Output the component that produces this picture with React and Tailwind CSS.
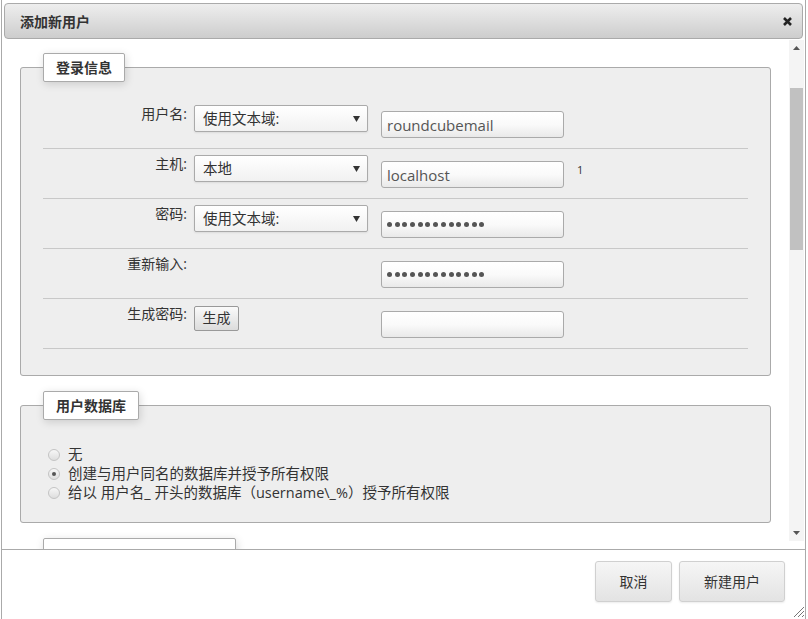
import React from "react";

const font = "font-['Open_Sans','Noto_Sans_CJK_SC',sans-serif]";

function Select({ text }) {
  return (
    <div className="w-[174px] h-[27px] border border-[#aaa] rounded-[2px] bg-linear-to-b from-white to-[#f1f1f1] shadow-[0_1px_2px_rgba(0,0,0,0.08)] flex items-center justify-between pl-[8px] pr-[7px] text-[14.5px] leading-[18px] text-[#333]">
      <span>{text}</span>
      <svg width="7" height="6" viewBox="0 0 7 6">
        <path d="M0 0 L7 0 L3.5 6 Z" fill="#333" />
      </svg>
    </div>
  );
}

function Dots() {
  return (
    <div className="flex gap-[2.7px]">
      {Array.from({ length: 13 }).map((_, i) => (
        <span key={i} className="block w-[5px] h-[5px] rounded-full bg-[#555]" />
      ))}
    </div>
  );
}

function Input({ children }) {
  return (
    <div className="w-[183px] h-[27px] border border-[#aaa] rounded-[3px] bg-linear-to-b from-white via-[#fafafa] to-[#e9e9e9] pl-[5px] flex items-center text-[15px] leading-[18px] text-[#555]">
      {children}
    </div>
  );
}

function Row({ label, middle, input, extra }) {
  return (
    <div className="flex h-[50px] border-b border-[#c8c8c8]">
      <div className="w-[147px] text-right pr-[3px] pt-[6px] text-[14px] leading-[18px] text-[#333]">{label}</div>
      <div className="w-[174px] ml-[4px] pt-[6px]">{middle}</div>
      <div className="ml-[13px] pt-[12px]">{input}</div>
      {extra}
    </div>
  );
}

function Legend({ children, className = "" }) {
  return (
    <legend className={"h-[29px] px-[12px] border border-[#aaa] rounded-[2px] bg-white text-[14px] font-bold leading-[27px] text-[#333] shadow-[1px_2px_8px_rgba(0,0,0,0.15)] " + className}>
      {children}
    </legend>
  );
}

function Radio({ checked, label }) {
  return (
    <div className="flex items-center h-[19px] text-[14.5px] leading-[19px] text-[#333]">
      <span className="ml-[5px] w-[12px] h-[12px] rounded-full border border-[#c4c4c4] bg-linear-to-b from-[#f7f7f7] to-[#dedede] flex items-center justify-center">
        {checked && <span className="w-[4px] h-[4px] rounded-full bg-[#555]" />}
      </span>
      <span className="ml-[8px]">{label}</span>
    </div>
  );
}

export default function App() {
  return (
    <div className={"w-[808px] h-[619px] bg-white overflow-hidden " + font}>
      <div className="ml-px w-[805px] h-full border-x border-[#aaa] flex flex-col pt-[3px]">
        {/* title bar */}
        <div className="mx-[2px] h-[36px] shrink-0 rounded-[4px] border border-[#aaa] bg-linear-to-b from-[#eeeeee] to-[#cdcdcd] flex items-center justify-between pl-[15px] pr-[10px]">
          <span className="text-[14px] font-bold text-[#333]">添加新用户</span>
          <svg width="9" height="9" viewBox="0 0 9 9">
            <path d="M1 1 L8 8 M8 1 L1 8" stroke="#222" strokeWidth="2.6" />
          </svg>
        </div>

        {/* body */}
        <div className="h-[510px] shrink-0 flex">
          <div className="flex-1 overflow-hidden px-[18px] pt-[14px]">
            <fieldset className="w-full border border-[#aaa] rounded-[3px] bg-[#eee] px-[22px] pt-[17px] pb-[26px]">
              <Legend>登录信息</Legend>
              <Row
                label="用户名:"
                middle={<Select text="使用文本域:" />}
                input={<Input>roundcubemail</Input>}
              />
              <Row
                label="主机:"
                middle={<Select text="本地" />}
                input={<Input>localhost</Input>}
                extra={<span className="ml-[13px] pt-[13px] text-[11px] text-[#333]">1</span>}
              />
              <Row
                label="密码:"
                middle={<Select text="使用文本域:" />}
                input={<Input><Dots /></Input>}
              />
              <Row label="重新输入:" middle={null} input={<Input><Dots /></Input>} />
              <Row
                label="生成密码:"
                middle={
                  <button className="w-[45px] h-[25px] border border-[#999] rounded-[2px] bg-linear-to-b from-[#fafafa] to-[#dcdcdc] text-[14px] leading-[18px] text-[#333]">
                    生成
                  </button>
                }
                input={<Input />}
              />
            </fieldset>

            <fieldset className="mt-[15px] w-full border border-[#aaa] rounded-[3px] bg-[#eee] px-[22px] pt-[25px] pb-[20px]">
              <Legend>用户数据库</Legend>
              <Radio label="无" />
              <Radio checked label="创建与用户同名的数据库并授予所有权限" />
              <Radio label="给以 用户名_ 开头的数据库（username\_%）授予所有权限" />
            </fieldset>

            <fieldset className="mt-[15px] w-full border border-[#aaa] rounded-[3px] bg-[#eee] px-[22px] h-[80px]">
              <Legend className="w-[193px]"></Legend>
            </fieldset>
          </div>

          {/* scrollbar */}
          <div className="w-[15px] mt-[1px] mb-[8px] mr-[1px] bg-[#f4f4f4] flex flex-col items-center">
            <svg className="mt-[6px]" width="7" height="4" viewBox="0 0 7 4">
              <path d="M0 4 L3.5 0 L7 4 Z" fill="#555" />
            </svg>
            <div className="mt-[38px] w-[13px] h-[162px] bg-[#c1c1c1]" />
            <div className="flex-1" />
            <svg className="mb-[6px]" width="7" height="4" viewBox="0 0 7 4">
              <path d="M0 0 L7 0 L3.5 4 Z" fill="#555" />
            </svg>
          </div>
        </div>

        {/* footer */}
        <div className="relative flex-1 border-t border-[#aaa] flex justify-end gap-[7px] pt-[11px] pr-[20px]">
          <button className="w-[77px] h-[41px] border border-[#d0d0d0] rounded-[3px] bg-linear-to-b from-[#f6f6f6] to-[#e3e3e3] shadow-[0_1px_2px_rgba(0,0,0,0.08)] text-[14px] text-[#333]">
            取消
          </button>
          <button className="w-[106px] h-[41px] border border-[#d0d0d0] rounded-[3px] bg-linear-to-b from-[#f6f6f6] to-[#e3e3e3] shadow-[0_1px_2px_rgba(0,0,0,0.08)] text-[14px] text-[#333]">
            新建用户
          </button>
          <svg className="absolute right-[0px] bottom-[1px]" width="13" height="13" viewBox="0 0 13 13">
            <path d="M12 2 L2 12 M12 6 L6 12 M12 10 L10 12" stroke="#777" strokeWidth="1" />
          </svg>
        </div>
      </div>
    </div>
  );
}
